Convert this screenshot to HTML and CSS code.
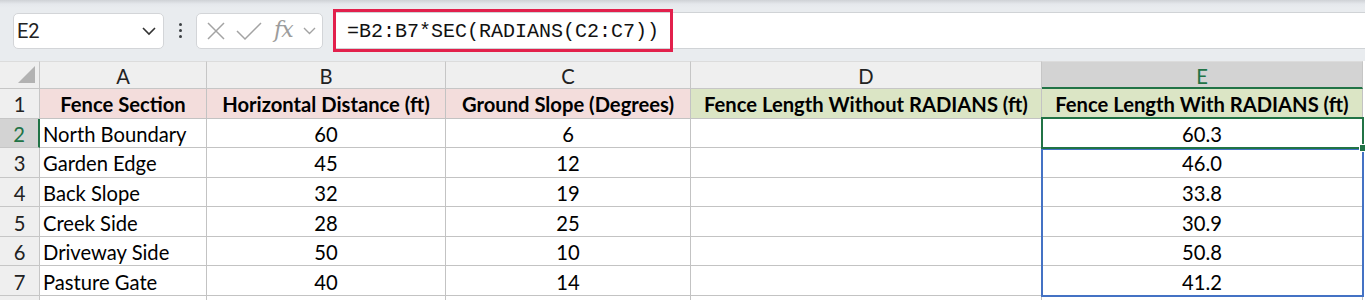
FILE: index.html
```html
<!DOCTYPE html>
<html lang="en">
<head>
    <meta charset="UTF-8">
    <title>Fence Length - RADIANS</title>
    <link rel="stylesheet" href="styles.css">
</head>
<body>
    <div class="toolbar">
        <div class="namebox">
            <span>E2</span>
            <svg class="chev" width="16" height="10" viewBox="0 0 16 10"><path d="M2 2 L8 8 L14 2" fill="none" stroke="#333" stroke-width="1.6"/></svg>
        </div>
        <div class="dots"><i></i><i></i><i></i></div>
        <div class="fxbox">
            <svg width="20" height="20" viewBox="0 0 20 20"><path d="M2 2 L18 18 M18 2 L2 18" stroke="#a3a3a3" stroke-width="1.5"/></svg>
            <svg width="26" height="20" viewBox="0 0 26 20"><path d="M1 10 L9 18 L25 2" fill="none" stroke="#a3a3a3" stroke-width="1.5"/></svg>
            <span class="fx">fx</span>
            <svg width="13" height="9" viewBox="0 0 13 9"><path d="M1 2 L6.5 7.5 L12 2" fill="none" stroke="#a3a3a3" stroke-width="1.4"/></svg>
        </div>
        <div class="formula">
            <span class="formula_text">=B2:B7*SEC(RADIANS(C2:C7))</span>
            <div class="highlight"></div>
        </div>
    </div>

    <div class="sheet">
        <div class="corner"><b></b></div>
        <div class="colhead">A</div>
        <div class="colhead">B</div>
        <div class="colhead">C</div>
        <div class="colhead">D</div>
        <div class="colhead active">E</div>

        <div class="rowhead">1</div>
        <div class="cell pink head">Fence Section</div>
        <div class="cell pink head">Horizontal Distance (ft)</div>
        <div class="cell pink head">Ground Slope (Degrees)</div>
        <div class="cell green head">Fence Length Without RADIANS (ft)</div>
        <div class="cell green head">Fence Length With RADIANS (ft)</div>

        <div class="rowhead active">2</div>
        <div class="cell">North Boundary</div>
        <div class="cell mid">60</div>
        <div class="cell mid">6</div>
        <div class="cell"></div>
        <div class="cell mid">60.3</div>

        <div class="rowhead">3</div>
        <div class="cell">Garden Edge</div>
        <div class="cell mid">45</div>
        <div class="cell mid">12</div>
        <div class="cell"></div>
        <div class="cell mid">46.0</div>

        <div class="rowhead">4</div>
        <div class="cell">Back Slope</div>
        <div class="cell mid">32</div>
        <div class="cell mid">19</div>
        <div class="cell"></div>
        <div class="cell mid">33.8</div>

        <div class="rowhead">5</div>
        <div class="cell">Creek Side</div>
        <div class="cell mid">28</div>
        <div class="cell mid">25</div>
        <div class="cell"></div>
        <div class="cell mid">30.9</div>

        <div class="rowhead">6</div>
        <div class="cell">Driveway Side</div>
        <div class="cell mid">50</div>
        <div class="cell mid">10</div>
        <div class="cell"></div>
        <div class="cell mid">50.8</div>

        <div class="rowhead">7</div>
        <div class="cell">Pasture Gate</div>
        <div class="cell mid">40</div>
        <div class="cell mid">14</div>
        <div class="cell"></div>
        <div class="cell mid">41.2</div>

        <div class="rowhead last"></div>
        <div class="cell last"></div>
        <div class="cell last"></div>
        <div class="cell last"></div>
        <div class="cell last"></div>
        <div class="cell last"></div>

        <div class="spill"></div>
        <div class="selected"><span class="handle"></span></div>
    </div>
</body>
</html>
```

FILE: styles.css
```css
* {
    margin: 0;
    padding: 0;
    box-sizing: border-box;
}

body {
    width: 1365px;
    height: 300px;
    overflow: hidden;
    background: #e9ecef;
    font-family: Lato, 'Liberation Sans', sans-serif;
}

.toolbar {
    height: 61px;
    display: flex;
    align-items: center;
    padding-left: 13px;
    background: linear-gradient(#cfd2d6 0, #e5e8ec 4px, #e9ecef 8px);
}

.namebox {
    width: 151px;
    height: 36px;
    background: #fff;
    border: 1px solid #d3d5d8;
    border-radius: 5px;
    display: flex;
    align-items: center;
    justify-content: space-between;
    padding: 0 6px 0 3px;
    font-family: Roboto, 'Noto Sans', sans-serif;
    font-size: 20px;
    color: #222;
}

.dots {
    width: 32px;
    display: flex;
    flex-direction: column;
    align-items: center;
    gap: 3px;
}

.dots i {
    width: 3px;
    height: 3px;
    border-radius: 50%;
    background: #3c4043;
}

.fxbox {
    width: 127px;
    height: 36px;
    background: #fff;
    border: 1px solid #d3d5d8;
    border-radius: 5px;
    display: flex;
    align-items: center;
    gap: 10px;
    padding-left: 9px;
}

.fx {
    font-family: 'DejaVu Serif', 'Liberation Serif', serif;
    font-style: italic;
    font-size: 22px;
    color: #9c9c9c;
    margin-left: 2px;
    margin-top: -3px;
    letter-spacing: -1px;
}

.formula {
    position: relative;
    flex: 1;
    height: 37px;
    margin-left: 10px;
    background: #fff;
    border-top: 1px solid #d0d3d6;
    border-bottom: 1px solid #d0d3d6;
    display: flex;
    align-items: center;
    padding-left: 14px;
    padding-top: 2px;
}

.formula_text {
    font-family: 'Liberation Mono', monospace;
    font-size: 20px;
    color: #111;
}

.highlight {
    position: absolute;
    left: 0;
    top: -4px;
    width: 340px;
    height: 43px;
    border: 3px solid #e2204c;
}

.sheet {
    position: relative;
    display: grid;
    grid-template-columns: 40px 167px 239px 245px 351px 321px;
    grid-template-rows: 28px repeat(7, 29.57px) 4px;
    background: #fff;
    font-size: 20.2px;
    color: #000;
}

.corner,
.colhead {
    background: #efefef;
    border-right: 1px solid #c6c6c6;
    border-bottom: 1px solid #c6c6c6;
    border-top: 1px solid #dcdcdc;
}

.corner {
    position: relative;
}

.corner b {
    position: absolute;
    right: 4px;
    bottom: 5px;
    width: 0;
    height: 0;
    border-left: 17px solid transparent;
    border-bottom: 17px solid #b2b2b2;
}

.colhead {
    display: flex;
    align-items: center;
    justify-content: center;
    padding-top: 2px;
    color: #222;
}

.colhead.active {
    background: #d3d3d3;
    color: #217346;
    border-bottom: 2px solid #217346;
}

.rowhead {
    background: #efefef;
    border-right: 1px solid #c6c6c6;
    border-bottom: 1px solid #c6c6c6;
    display: flex;
    align-items: center;
    justify-content: center;
    padding-top: 2px;
    color: #222;
}

.rowhead.active {
    background: #d3d3d3;
    color: #217346;
    border-right: 2px solid #217346;
}

.cell {
    border-right: 1px solid #c3c3c3;
    border-bottom: 1px solid #c3c3c3;
    display: flex;
    align-items: center;
    padding: 2px 0 0 3px;
    white-space: nowrap;
}

.last {
    border-bottom: none;
    padding: 0;
}

.mid,
.head {
    justify-content: center;
    padding-left: 0;
}

.head {
    font-weight: bold;
}

.pink {
    background: #f3dddc;
}

.green {
    background: #dbe5c5;
}

.spill {
    position: absolute;
    left: 1041px;
    top: 87px;
    width: 323px;
    height: 149px;
    border: 2px solid #4472c4;
}

.selected {
    position: absolute;
    left: 1041px;
    top: 56px;
    width: 323px;
    height: 32px;
    border: 2px solid #217346;
}

.handle {
    position: absolute;
    right: -5px;
    bottom: -5px;
    width: 8px;
    height: 8px;
    background: #217346;
    border: 1px solid #fff;
}
```
